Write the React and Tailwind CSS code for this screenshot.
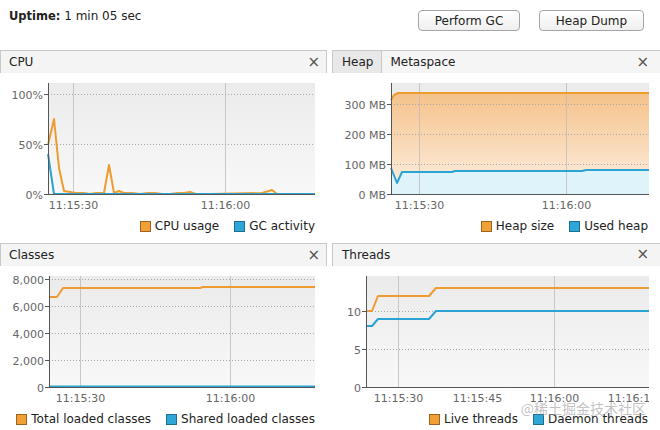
import React from "react";

const ORANGE = "#ee9c30";
const BLUE = "#2ba3d3";

function pts(a) {
  return a.map((p) => p.join(",")).join(" ");
}

function Chart({ id, width, axisX, right, yTicks, xTicks, vgrid, areas, lines, clipX }) {
  const top = 10;
  const bottom = 121;
  return (
    <svg width={width} height={142} className="block font-['DejaVu_Sans',sans-serif]">
      <defs>
        <linearGradient id={`bg-${id}`} x1="0" y1="0" x2="0" y2="1">
          <stop offset="0" stopColor="#ebebeb" />
          <stop offset="1" stopColor="#f8f8f8" />
        </linearGradient>
        <linearGradient id={`or-${id}`} x1="0" y1="0" x2="0" y2="1">
          <stop offset="0" stopColor="#f5c28a" />
          <stop offset="1" stopColor="#fdf0e3" />
        </linearGradient>
        <clipPath id={`ylab-${id}`}>
          <rect x="0" y={top} width={axisX} height={140} />
        </clipPath>
        <clipPath id={`xlab-${id}`}>
          <rect x="0" y="0" width={clipX || width} height={142} />
        </clipPath>
      </defs>
      <rect x={axisX} y={top} width={right - axisX} height={bottom - top} fill={`url(#bg-${id})`} />
      {areas &&
        areas.map((a, i) => (
          <polygon key={i} points={pts(a.points)} fill={a.fill === "orange" ? `url(#or-${id})` : a.fill} />
        ))}
      {vgrid.map((x) => (
        <line key={x} x1={x + 0.5} x2={x + 0.5} y1={top} y2={bottom} stroke="#bdbdbd" strokeOpacity="0.8" />
      ))}
      {yTicks
        .filter((t) => t.y < bottom)
        .map((t) => (
          <line
            key={t.y}
            x1={axisX}
            x2={right}
            y1={t.y + 0.5}
            y2={t.y + 0.5}
            stroke="#a8a8a8"
            strokeDasharray="1 2"
          />
        ))}
      {lines.map((l, i) => (
        <polyline
          key={i}
          points={pts(l.points)}
          fill="none"
          stroke={l.color}
          strokeWidth="2"
          strokeLinejoin="round"
        />
      ))}
      <line x1={axisX + 0.5} x2={axisX + 0.5} y1={top} y2={bottom + 1} stroke="#555" />
      <line x1={axisX} x2={right} y1={bottom + 0.5} y2={bottom + 0.5} stroke="#555" />
      <g clipPath={`url(#ylab-${id})`}>
        {yTicks.map((t) => (
          <g key={t.y}>
            <line x1={axisX - 4} x2={axisX} y1={t.y + 0.5} y2={t.y + 0.5} stroke="#555" />
            <text x={axisX - 5} y={t.y + 4.5} textAnchor="end" fontSize="11" fill="#666">
              {t.label}
            </text>
          </g>
        ))}
      </g>
      <g clipPath={`url(#xlab-${id})`}>
        {xTicks.map((t) => (
          <text key={t.x} x={t.x + 0.5} y={136} textAnchor="middle" fontSize="11" fill="#666">
            {t.label}
          </text>
        ))}
      </g>
    </svg>
  );
}

function Legend({ items }) {
  return (
    <div className="flex h-[22px] items-center justify-end gap-[15px] pr-[12px] text-[12px] text-[#222]">
      {items.map((it) => (
        <div key={it.label} className="flex items-center gap-[4px]">
          <span
            className={
              it.color === "orange"
                ? "block h-[11px] w-[11px] border border-[#9c6420] bg-[#f0a035]"
                : "block h-[11px] w-[11px] border border-[#1d6f92] bg-[#2fa6d8]"
            }
          />
          <span className="leading-[14px]">{it.label}</span>
        </div>
      ))}
    </div>
  );
}

function Close() {
  return <span className="pr-[6px] text-[15px] leading-none text-[#555]">×</span>;
}

function Header({ children }) {
  return (
    <div className="flex h-[23px] items-center border border-b-0 border-[#c8c8c8] bg-[#f4f4f4] text-[12px] text-[#222]">
      {children}
      <div className="flex-1" />
      <Close />
    </div>
  );
}

function Panel({ header, chart, legend, overlay }) {
  return (
    <div className="relative flex h-[187px] flex-col">
      {header}
      <div className="flex-1 bg-white">
        {chart}
        {legend}
      </div>
      {overlay}
    </div>
  );
}

export default function App() {
  const cpuLine = [
    [48, 72], [54, 46], [59, 95], [64, 118], [70, 119], [76, 120], [84, 120], [90, 121], [96, 120],
    [104, 120], [109, 92], [114, 120], [119, 118], [124, 120], [132, 120], [140, 121], [148, 120],
    [155, 120], [162, 121], [170, 121], [178, 120], [184, 120], [190, 119], [196, 121], [210, 121],
    [262, 120], [272, 117], [277, 121], [315, 121],
  ];
  const gcLine = [[48, 81], [54, 121], [315, 121]];

  const heapLine = [[59, 27], [62, 22], [66, 20], [317, 20]];
  const usedLine = [[59, 95], [65, 110], [70, 99], [120, 99], [123, 98], [250, 98], [254, 97], [317, 97]];

  const totalLine = [[49, 31], [57, 31], [63, 22], [200, 22], [203, 21], [315, 21]];
  const sharedLine = [[49, 120.5], [315, 120.5]];

  const liveLine = [[34, 45], [40, 45], [46, 30], [97, 30], [104, 22], [317, 22]];
  const daemonLine = [[34, 60], [40, 60], [46, 53], [97, 53], [104, 45], [317, 45]];

  return (
    <div className="h-[430px] w-[660px] overflow-hidden bg-white font-['DejaVu_Sans',sans-serif] text-[#222]">
      <div className="flex h-[50px] items-start">
        <div className="pl-[9px] pt-[8px] text-[12px] leading-[16px]">
          <span className="text-[11.5px] font-bold">Uptime:</span> 1 min 05 sec
        </div>
        <div className="flex-1" />
        <div className="mt-[10px] flex gap-[19px] pr-[16px]">
          <button className="h-[21px] w-[102px] rounded-[4px] border border-[#a6a6a6] bg-gradient-to-b from-white to-[#efefef] text-[12px] text-[#222]">
            Perform GC
          </button>
          <button className="h-[21px] w-[105px] rounded-[4px] border border-[#a6a6a6] bg-gradient-to-b from-white to-[#efefef] text-[12px] text-[#222]">
            Heap Dump
          </button>
        </div>
      </div>

      <div className="grid grid-cols-[327px_328px] gap-x-[5px] gap-y-[6px]">
        <Panel
          header={
            <Header>
              <span className="pl-[8px]">CPU</span>
            </Header>
          }
          chart={
            <Chart
              id="cpu"
              width={327}
              axisX={48}
              right={315}
              yTicks={[
                { y: 21, label: "100%" },
                { y: 71, label: "50%" },
                { y: 121, label: "0%" },
              ]}
              xTicks={[
                { x: 73, label: "11:15:30" },
                { x: 225, label: "11:16:00" },
              ]}
              vgrid={[73, 225]}
              lines={[
                { points: cpuLine, color: ORANGE },
                { points: gcLine, color: BLUE },
              ]}
            />
          }
          legend={
            <Legend
              items={[
                { label: "CPU usage", color: "orange" },
                { label: "GC activity", color: "blue" },
              ]}
            />
          }
        />
        <Panel
          header={
            <div className="flex h-[23px] items-stretch border-t border-l border-[#c8c8c8] bg-[#f5f5f5] text-[12px] text-[#222]">
              <div className="flex items-center border-r border-[#c8c8c8] bg-[#e8e8e8] px-[9px] pr-[8px]">Heap</div>
              <div className="flex items-center pl-[8px]">Metaspace</div>
              <div className="flex-1" />
              <div className="flex items-center pr-[5px]">
                <Close />
              </div>
            </div>
          }
          chart={
            <Chart
              id="heap"
              width={328}
              axisX={59}
              right={317}
              yTicks={[
                { y: 31, label: "300 MB" },
                { y: 61, label: "200 MB" },
                { y: 91, label: "100 MB" },
                { y: 121, label: "0 MB" },
              ]}
              xTicks={[
                { x: 87, label: "11:15:30" },
                { x: 234, label: "11:16:00" },
              ]}
              vgrid={[87, 234]}
              areas={[
                { points: [...heapLine, [317, 121], [59, 121]], fill: "orange" },
                { points: [...usedLine, [317, 121], [59, 121]], fill: "#dff3fb" },
              ]}
              lines={[
                { points: heapLine, color: ORANGE },
                { points: usedLine, color: BLUE },
              ]}
            />
          }
          legend={
            <Legend
              items={[
                { label: "Heap size", color: "orange" },
                { label: "Used heap", color: "blue" },
              ]}
            />
          }
        />
        <Panel
          header={
            <Header>
              <span className="pl-[8px]">Classes</span>
            </Header>
          }
          chart={
            <Chart
              id="classes"
              width={327}
              axisX={49}
              right={315}
              yTicks={[
                { y: 13, label: "8,000" },
                { y: 40, label: "6,000" },
                { y: 67, label: "4,000" },
                { y: 94, label: "2,000" },
                { y: 121, label: "0" },
              ]}
              xTicks={[
                { x: 80, label: "11:15:30" },
                { x: 230, label: "11:16:00" },
              ]}
              vgrid={[80, 230]}
              lines={[
                { points: totalLine, color: ORANGE },
                { points: sharedLine, color: BLUE },
              ]}
            />
          }
          legend={
            <Legend
              items={[
                { label: "Total loaded classes", color: "orange" },
                { label: "Shared loaded classes", color: "blue" },
              ]}
            />
          }
        />
        <Panel
          header={
            <div className="flex h-[23px] items-center border-t border-l border-[#c8c8c8] bg-[#f4f4f4] text-[12px] text-[#222]">
              <span className="pl-[9px]">Threads</span>
              <div className="flex-1" />
              <div className="pr-[5px]">
                <Close />
              </div>
            </div>
          }
          chart={
            <Chart
              id="threads"
              width={328}
              axisX={34}
              right={317}
              clipX={317}
              yTicks={[
                { y: 45, label: "10" },
                { y: 83, label: "5" },
                { y: 121, label: "0" },
              ]}
              xTicks={[
                { x: 66, label: "11:15:30" },
                { x: 145, label: "11:15:45" },
                { x: 222, label: "11:16:00" },
                { x: 300, label: "11:16:15" },
              ]}
              vgrid={[66, 222]}
              lines={[
                { points: liveLine, color: ORANGE },
                { points: daemonLine, color: BLUE },
              ]}
            />
          }
          legend={
            <Legend
              items={[
                { label: "Live threads", color: "orange" },
                { label: "Daemon threads", color: "blue" },
              ]}
            />
          }
          overlay={
            <div className="pointer-events-none absolute bottom-[13px] right-[14px] font-['Noto_Sans_CJK_SC',sans-serif] text-[14px] leading-[18px] text-[#9a9a9a]/60">
              @稀土掘金技术社区
            </div>
          }
        />
      </div>
    </div>
  );
}
